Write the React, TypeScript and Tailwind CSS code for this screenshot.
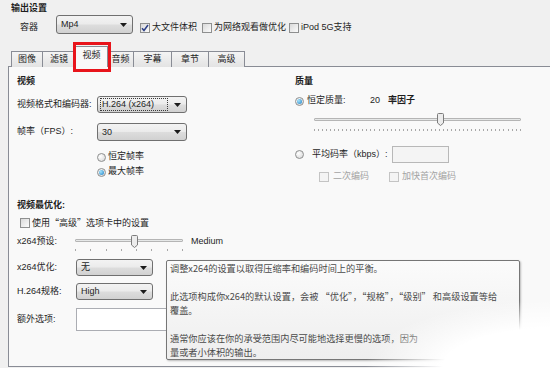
import type { ReactNode } from "react";

// Handbrake-style "输出设置" panel, video tab open, with a hover tooltip over the
// x264 optimisation row. Win7 look: gradient combos, thin gray borders.

const Arrow = () => (
  <svg width="7" height="4" viewBox="0 0 7 4" className="shrink-0">
    <path d="M0 0h7L3.5 4z" fill="#1b1b1b" />
  </svg>
);

function Select({ w, text, focus }: { w: string; text: string; focus?: boolean }) {
  return (
    <div
      className={`flex h-full shrink-0 items-center rounded-[3px] border border-[#707070] bg-[linear-gradient(#f3f3f3_0%,#ebebeb_48%,#dddddd_52%,#d1d1d1_100%)] pl-[2px] pr-[5px] ${w}`}
    >
      {focus ? (
        <span className="mr-[6px] flex-1 border border-dotted border-[#3a3a3a] px-[1px] leading-[11px]">{text}</span>
      ) : (
        <span className="flex-1 pl-[2px] leading-[11px]">{text}</span>
      )}
      <Arrow />
    </div>
  );
}

function Check({ checked, disabled }: { checked?: boolean; disabled?: boolean }) {
  return (
    <span
      className={`flex h-[10px] w-[10px] shrink-0 items-center justify-center border ${
        disabled
          ? "border-[#c4c4c4] bg-[#f4f4f4]"
          : "border-[#8e8f8f] bg-[linear-gradient(135deg,#d9d9d9,#fbfbfb)]"
      }`}
    >
      {checked ? (
        <svg width="8" height="8" viewBox="0 0 8 8">
          <path d="M1 4.2L3 6.5L7 1" fill="none" stroke="#2c3f86" strokeWidth="1.5" />
        </svg>
      ) : null}
    </span>
  );
}

function Radio({ checked }: { checked?: boolean }) {
  return (
    <span className="flex h-[9px] w-[9px] shrink-0 items-center justify-center rounded-full border border-[#8e8f8f] bg-[radial-gradient(circle_at_35%_35%,#ffffff,#d4d4d4)]">
      {checked ? (
        <span className="h-[5px] w-[5px] rounded-full bg-[radial-gradient(circle_at_35%_35%,#a6e4fb,#1b7ec6)]" />
      ) : null}
    </span>
  );
}

const Thumb = () => (
  <svg width="7" height="13" viewBox="0 0 7 13">
    <path
      d="M0.5 1.5Q0.5 0.5 1.5 0.5H5.5Q6.5 0.5 6.5 1.5V10L3.5 12.5L0.5 10Z"
      fill="#ececec"
      stroke="#7c7c7c"
    />
  </svg>
);

function Ticks({ count }: { count: number }) {
  return (
    <>
      {Array.from({ length: count }).map((_, i) => (
        <span key={i} className="h-[2px] w-px bg-[#a8a8a8]" />
      ))}
    </>
  );
}

const Label = ({ w, children }: { w: string; children: ReactNode }) => (
  <span className={`shrink-0 ${w}`}>{children}</span>
);

export default function App() {
  const tabs = [
    { t: "图像", w: "w-[32px]" },
    { t: "滤镜", w: "w-[34px]" },
    { t: "视频", w: "w-[33px]", on: true },
    { t: "音频", w: "w-[27px]" },
    { t: "字幕", w: "w-[39px]" },
    { t: "章节", w: "w-[38px]" },
    { t: "高级", w: "w-[37px]" },
  ];

  return (
    <div className="relative h-[368px] w-[550px] overflow-hidden bg-[#f0f0f0] font-['Liberation_Sans','Noto_Sans_CJK_SC',sans-serif] text-[9px] text-[#1e1e1e]">
      <div className="h-[14px] pl-[11px] pt-[3px] font-bold leading-[11px]">输出设置</div>

      <div className="flex h-[20px] items-end pl-[20px]">
        <span className="mb-[1px] leading-[12px]">容器</span>
        <div className="ml-[18px] h-[19px]">
          <Select w="w-[77px]" text="Mp4" />
        </div>
        <label className="ml-[7px] flex h-[12px] items-center gap-[2px]">
          <Check checked />
          大文件体积
        </label>
        <label className="ml-[5px] flex h-[12px] items-center gap-[2px]">
          <Check />
          为网络观看做优化
        </label>
        <label className="ml-[3px] flex h-[12px] items-center gap-[2px]">
          <Check />
          iPod 5G支持
        </label>
      </div>

      <div className="relative z-10 mt-[12px] flex h-[21px] items-end pl-[12px]">
        {tabs.map((tab) => (
          <div
            key={tab.t}
            className={`-ml-px flex shrink-0 items-center justify-center border border-b-0 border-[#898c95] ${tab.w} ${
              tab.on
                ? "h-[21px] bg-[#f9f9f9] pb-[3px]"
                : "h-[16px] bg-[linear-gradient(#f4f4f4,#e3e3e3)]"
            }`}
          >
            {tab.t}
          </div>
        ))}
      </div>

      <div className="ml-[8px] mt-[-1px] flex h-[301px] border border-r-0 border-[#898c95] bg-[#f9f9f9]">
        {/* left column */}
        <div className="flex w-[285px] shrink-0 flex-col pl-[8px]">
          <div className="mt-[7px] flex h-[16px] items-center font-bold">视频</div>
          <div className="mt-[6px] flex h-[17px] items-center">
            <Label w="w-[80px]">视频格式和编码器:</Label>
            <Select w="w-[90px]" text="H.264 (x264)" focus />
          </div>
          <div className="mt-[10px] flex h-[18px] items-center">
            <Label w="w-[80px]">帧率（FPS）:</Label>
            <Select w="w-[90px]" text="30" />
          </div>
          <div className="mt-[9px] flex h-[14px] items-center gap-[2px] pl-[80px]">
            <Radio />
            恒定帧率
          </div>
          <div className="mt-[1px] flex h-[14px] items-center gap-[2px] pl-[80px]">
            <Radio checked />
            最大帧率
          </div>
          <div className="mt-[19px] flex h-[16px] items-center font-bold">视频最优化:</div>
          <div className="mt-[2px] flex h-[14px] items-center gap-[2px] pl-[3px] font-['Noto_Sans_CJK_SC',sans-serif]">
            <Check />
            使用“高级”选项卡中的设置
          </div>
          <div className="mt-[3px] flex h-[18px] items-center">
            <Label w="w-[58px]">x264预设:</Label>
            <div className="relative h-full w-[108px] shrink-0">
              <div className="absolute left-0 right-0 top-[6px] h-[3px] rounded-[1px] border border-[#b5b5b5] bg-[#e6e8e8]" />
              <div className="absolute left-0 right-0 top-[16px] flex justify-between">
                <Ticks count={8} />
              </div>
              <div className="absolute left-[56px] top-[2px] flex">
                <Thumb />
              </div>
            </div>
            <span className="ml-[8px]">Medium</span>
          </div>
          <div className="mt-[8px] flex h-[17px] items-center">
            <Label w="w-[59px]">x264优化:</Label>
            <Select w="w-[77px]" text="无" />
            <span className="ml-[13px]">
              <Check />
            </span>
          </div>
          <div className="mt-[7px] flex h-[17px] items-center">
            <Label w="w-[59px]">H.264规格:</Label>
            <Select w="w-[77px]" text="High" />
          </div>
          <div className="mt-[8px] flex h-[23px] items-center">
            <Label w="w-[59px]">额外选项:</Label>
            <div className="h-full w-[440px] shrink-0 border border-[#abadb3] bg-white" />
          </div>
        </div>

        {/* right column */}
        <div className="flex flex-1 flex-col">
          <div className="mt-[7px] flex h-[16px] items-center pl-[1px] font-bold">质量</div>
          <div className="mt-[4px] flex h-[14px] items-center">
            <span className="mt-[1px] flex pl-[1px]">
              <Radio checked />
            </span>
            <span className="ml-[3px] w-[63px]">恒定质量:</span>
            <span>20</span>
            <span className="ml-[8px] font-bold">率因子</span>
          </div>
          <div className="relative ml-[20px] mt-[4px] h-[20px] w-[207px]">
            <div className="absolute left-0 right-0 top-[6px] h-[3px] rounded-[1px] border border-[#b5b5b5] bg-[#e6e8e8]" />
            <div className="absolute left-0 right-0 top-[17px] flex justify-between">
              <Ticks count={52} />
            </div>
            <div className="absolute left-[123px] top-[1px] flex">
              <Thumb />
            </div>
          </div>
          <div className="mt-[14px] flex h-[17px] items-center">
            <span className="flex pl-[1px]">
              <Radio />
            </span>
            <span className="ml-[8px] w-[80px]">平均码率（kbps）:</span>
            <div className="h-full w-[57px] border border-[#b8b8b8] bg-[#f4f4f4]" />
          </div>
          <div className="mt-[7px] flex h-[14px] items-center pl-[25px] text-[#a3a3a3]">
            <Check disabled />
            <span className="ml-[4px] w-[36px]">二次编码</span>
            <span className="ml-[20px] flex">
              <Check disabled />
            </span>
            <span className="ml-[3px]">加快首次编码</span>
          </div>
        </div>
      </div>

      {/* selected-tab highlight */}
      <div className="absolute left-[73px] top-[42px] z-20 h-[30px] w-[38px] border-[3px] border-[#e8141b]" />

      {/* tooltip */}
      <div className="absolute left-[166px] top-[260px] z-30 h-[100px] w-[354px] overflow-hidden rounded-[2px] border border-[#767676] bg-[linear-gradient(#fbfbfb,#eeeeee)] pl-[3px] font-['Noto_Sans_CJK_SC',sans-serif] text-[9.2px] leading-[14px] text-[#4a4a4a] shadow-[1px_1px_2px_rgba(0,0,0,0.25)]">
        <div className="whitespace-nowrap">调整x264的设置以取得压缩率和编码时间上的平衡。</div>
        <div className="h-[14px]" />
        <div className="whitespace-nowrap">此选项构成你x264的默认设置，会被 “优化”，“规格”，“级别” 和高级设置等给</div>
        <div className="whitespace-nowrap">覆盖。</div>
        <div className="h-[14px]" />
        <div className="whitespace-nowrap">通常你应该在你的承受范围内尽可能地选择更慢的选项，因为</div>
        <div className="whitespace-nowrap">量或者小体积的输出。</div>
      </div>

      {/* white fade at the bottom-right corner of the capture */}
      <div className="pointer-events-none absolute bottom-0 right-0 z-40 h-[100px] w-[250px] bg-[radial-gradient(185px_68px_at_100%_100%,#ffffff_58%,rgba(255,255,255,0)_100%)]" />
    </div>
  );
}
